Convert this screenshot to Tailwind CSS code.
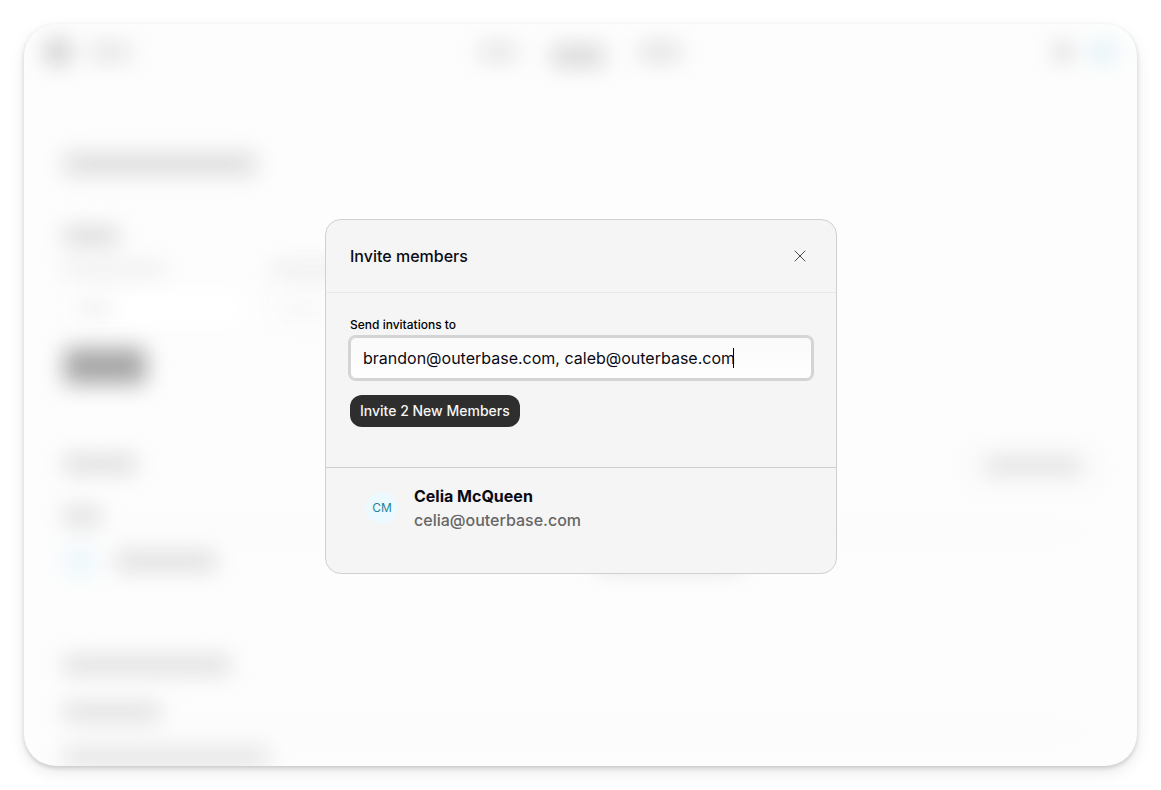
<!DOCTYPE html>
<html lang="en">
<head>
<meta charset="utf-8">
<meta name="viewport" content="width=device-width, initial-scale=1">
<title>Invite members</title>
<script src="https://cdn.jsdelivr.net/npm/@tailwindcss/browser@4"></script>
</head>
<body class="bg-white p-6 font-['Inter',sans-serif] text-[#0a0a14]">
<div class="relative flex h-[calc(100vh-48px)] flex-col overflow-hidden rounded-[32px] bg-[#fdfdfd] shadow-[0_2px_4px_rgba(0,0,0,0.16),0_6px_16px_rgba(0,0,0,0.09)]">

  <!-- Settings page, out of focus behind the dialog -->
  <div aria-hidden="true" class="flex flex-col blur-[11px]">
    <div class="grid h-14 grid-cols-3 items-center px-[22px]">
      <div class="flex items-center gap-5">
        <div class="size-6 rounded-md bg-[#c8c8c8]"></div>
        <div class="h-4 w-10 bg-[#e0e0e0]"></div>
      </div>
      <div class="flex items-center justify-center gap-9">
        <div class="h-4 w-9 bg-[#e0e0e0]"></div>
        <div class="mt-2 h-5 w-[52px] bg-[#d5d5d5]"></div>
        <div class="h-4 w-10 bg-[#dcdcdc]"></div>
      </div>
      <div class="flex items-center justify-end gap-5">
        <div class="size-4 bg-[#d0d0d0]"></div>
        <div class="h-5 w-6 rounded-full bg-[#d9eef8]"></div>
      </div>
    </div>

    <div class="flex flex-col px-10 pt-[74px]">
      <div class="h-5 w-48 bg-[#dadada]"></div>
      <div class="mt-[54px] h-4 w-[54px] bg-[#d5d5d5]"></div>
      <div class="mt-5 flex gap-[107px]">
        <div class="h-3 w-[101px] bg-[#ebebeb]"></div>
        <div class="h-3 w-[101px] bg-[#e8e8e8]"></div>
      </div>
      <div class="mt-3.5 flex gap-7">
        <div class="flex h-9 w-[180px] items-center bg-white px-3"><div class="h-3 w-9 bg-[#e9e9e9]"></div></div>
        <div class="flex h-9 w-[180px] items-center bg-[#fcfcfc] px-3"><div class="h-3 w-9 bg-[#f3f3f3]"></div></div>
      </div>
      <div class="mt-[22px] h-9 w-[82px] rounded-md bg-[#a6a6a6]"></div>

      <div class="mt-[62px] flex h-9 items-center justify-between">
        <div class="h-4 w-[72px] bg-[#d8d8d8]"></div>
        <div class="mt-1 flex h-9 items-center bg-[#fafafa] px-4"><div class="h-4 w-24 bg-[#dfdfdf]"></div></div>
      </div>
      <div class="mt-[26px] h-4 w-9 bg-[#d9d9d9]"></div>
      <div class="mt-2 mr-3 h-px bg-[#eeeeee]"></div>
      <div class="mt-3 flex items-center">
        <div class="flex flex-1 items-center gap-5">
          <div class="size-8 rounded-full bg-[#ebf7fc]"></div>
          <div class="h-4 w-[100px] bg-[#d8d8d8]"></div>
        </div>
        <div class="flex-1"><div class="ml-4 h-4 w-[144px] bg-[#dcdcdc]"></div></div>
      </div>
      <div class="mt-20 h-4 w-[166px] bg-[#dadada]"></div>
      <div class="mt-[31px] h-4 w-24 bg-[#dbdbdb]"></div>
      <div class="mt-3 mr-3 h-px bg-[#eeeeee]"></div>
      <div class="mt-4 h-4 w-[204px] bg-[#dfdfdf]"></div>
    </div>
  </div>

  <!-- Dialog -->
  <div class="absolute inset-0 flex items-center justify-center pt-0.5 pl-px">
    <div role="dialog" aria-labelledby="dialog-title" class="w-full max-w-lg rounded-2xl border border-[#d0d0d0] bg-[#f5f5f5]">
      <div class="flex h-[73px] items-center justify-between border-b border-[#e9e9e9] px-6">
        <h2 id="dialog-title" class="text-base font-medium">Invite members</h2>
        <button type="button" aria-label="Close" class="flex size-6 items-center justify-center text-[#4a4a4a]">
          <svg class="size-3" viewBox="0 0 12 12" fill="none" stroke="currentColor" stroke-width="1" stroke-linecap="round"><path d="M1 1l10 10M11 1L1 11"/></svg>
        </button>
      </div>
      <form class="px-6 pt-6 pb-10">
        <label for="emails" class="block text-xs leading-4 font-medium text-black">Send invitations to</label>
        <div class="relative mt-1">
          <input id="emails" type="text" value="brandon@outerbase.com, caleb@outerbase.com" class="block h-[42px] w-full rounded-md border border-[#d4d4d4] bg-linear-to-b from-[#fafafa] to-white px-3 text-base ring-2 ring-[#d4d4d4] outline-none">
          <span aria-hidden="true" class="absolute top-[11px] left-[383px] h-5 w-px bg-black"></span>
        </div>
        <button type="button" class="mt-4 h-8 rounded-xl bg-[#2e2e2e] px-2.5 text-sm font-medium text-[#f5f5f5]">Invite 2 New Members</button>
      </form>
      <div class="flex h-[106px] items-start gap-4 border-t border-[#d0d0d0] px-10 pt-4">
        <div class="mt-2 flex size-8 items-center justify-center rounded-full bg-[#ecfaff] text-xs text-[#1f8299]">CM</div>
        <div>
          <p class="text-base leading-6 font-bold">Celia McQueen</p>
          <p class="text-base leading-6 font-medium text-[#666666]">celia@outerbase.com</p>
        </div>
      </div>
    </div>
  </div>
</div>
</body>
</html>
